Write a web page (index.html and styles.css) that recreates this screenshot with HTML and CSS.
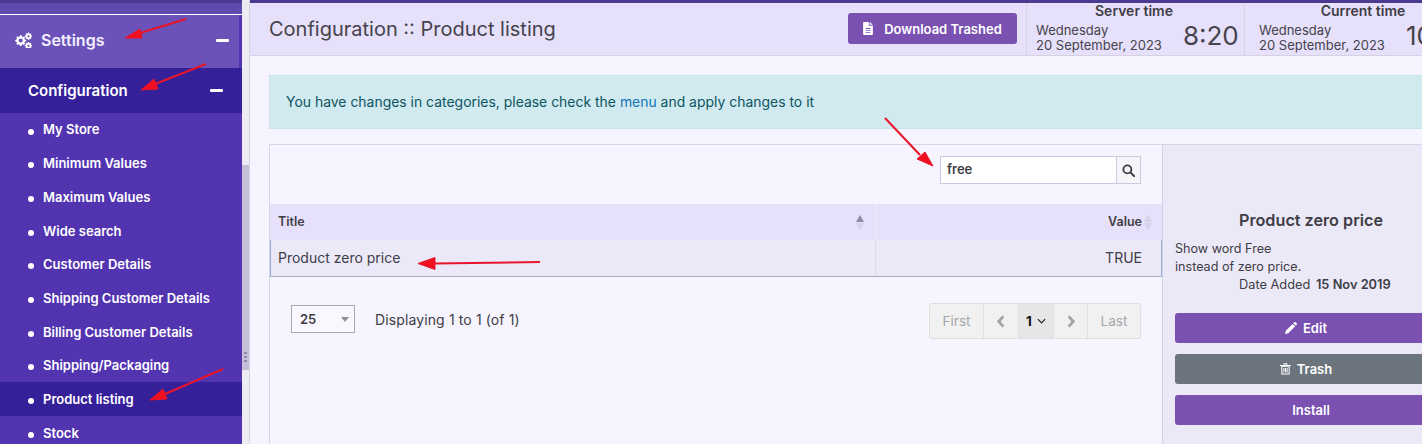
FILE: index.html
```html
<!DOCTYPE html>
<html lang="en">
<head>
<meta charset="utf-8">
<title>Configuration :: Product listing</title>
<link rel="stylesheet" href="styles.css">
</head>
<body>
<div class="page">
  <aside class="sidebar">
    <div class="side-top"></div>
    <div class="side-settings">
      <svg class="gears" viewBox="0 0 18 16" width="18" height="16"><g fill="#fff"><path fill-rule="evenodd" d="M6 3.2l1.4-.1.4 1.3 1 .5 1.2-.6 1 1-.6 1.2.5 1 1.3.4v1.4l-1.3.4-.5 1 .6 1.2-1 1-1.2-.6-1 .5-.4 1.3H6l-.4-1.3-1-.5-1.2.6-1-1 .6-1.2-.5-1L1.200 9.300V7.900l1.300-.4.5-1-.6-1.200 1-1 1.200.6 1-.5zM6.700 6.500a2 2 0 1 0 0 4.100 2 2 0 0 0 0-4.100z"/><path fill-rule="evenodd" d="M14 .5h1l.3.9.6.3.9-.4.600.7-.4.800.3.600.9.300v1l-.9.3-.3.600.4.800-.6.700-.9-.4-.6.3-.3.900h-1l-.3-.9-.6-.3-.8.4-.7-.7.4-.8-.3-.6-.9-.3v-1l.9-.3.3-.6-.4-.8.7-.7.8.4.6-.3zM14.500 3.200a1.100 1.100 0 1 0 0 2.200 1.100 1.100 0 0 0 0-2.200z"/><path fill-rule="evenodd" d="M14 10h1l.3.900.6.300.9-.4.600.7-.4.800.3.600.9.300v1l-.9.300-.3.600.4.800-.6.700-.9-.4-.6.300-.3.900h-1l-.3-.9-.6-.3-.8.4-.7-.7.4-.8-.3-.6-.9-.3v-1l.9-.3.3-.6-.4-.8.7-.7.8.4.6-.3zM14.500 12.700a1.100 1.100 0 1 0 0 2.200 1.100 1.100 0 0 0 0-2.200z"/></g></svg>
      <span class="settings-label">Settings</span>
      <span class="minus"></span>
    </div>
    <div class="side-config">
      <span class="config-label">Configuration</span>
      <span class="minus"></span>
    </div>
    <ul class="side-list">
      <li class="side-item">My Store</li>
      <li class="side-item">Minimum Values</li>
      <li class="side-item">Maximum Values</li>
      <li class="side-item">Wide search</li>
      <li class="side-item">Customer Details</li>
      <li class="side-item">Shipping Customer Details</li>
      <li class="side-item">Billing Customer Details</li>
      <li class="side-item">Shipping/Packaging</li>
      <li class="side-item active">Product listing</li>
      <li class="side-item">Stock</li>
    </ul>
  </aside>
  <div class="rail"><div class="rail-thumb"><span class="grip"></span></div></div>
  <main class="main">
    <div class="top-strip"></div>
    <header class="header">
      <h1 class="page-title">Configuration :: Product listing</h1>
      <button class="btn-download">
        <svg viewBox="0 0 12 16" width="10" height="13"><path fill="#fff" fill-rule="evenodd" d="M1 0h6v4.500h5V15a1 1 0 0 1-1 1H1a1 1 0 0 1-1-1V1a1 1 0 0 1 1-1zm7 0l4 3.500H8zM3 7.500v1h6v-1zm0 2.500v1h6v-1zm0 2.500v1h6v-1z"/></svg>
        Download Trashed
      </button>
      <section class="clock clock-server">
        <h2 class="clock-title">Server time</h2>
        <div class="clock-body">
          <div class="clock-date">Wednesday<br>20 September, 2023</div>
          <div class="clock-time">8:20</div>
        </div>
      </section>
      <section class="clock clock-current">
        <h2 class="clock-title">Current time</h2>
        <div class="clock-body">
          <div class="clock-date">Wednesday<br>20 September, 2023</div>
          <div class="clock-time">10:20</div>
        </div>
      </section>
    </header>
    <div class="content">
      <div class="alert">You have changes in categories, please check the <a class="alert-link">menu</a> and apply changes to it</div>
      <div class="panel">
        <div class="listing">
          <div class="search-row">
            <div class="search">
              <span class="search-input">free</span>
              <span class="search-btn"><svg viewBox="0 0 14 14" width="13" height="13"><circle cx="5.800" cy="5.800" r="4.300" fill="none" stroke="#3f3f46" stroke-width="2"/><path d="M9 9l4 4" stroke="#3f3f46" stroke-width="2.200" stroke-linecap="round"/></svg></span>
            </div>
          </div>
          <div class="thead">
            <div class="th th-title">Title<span class="sort sort-on"><i class="up"></i><i class="down"></i></span></div>
            <div class="th th-value">Value<span class="sort"><i class="up"></i><i class="down"></i></span></div>
          </div>
          <div class="trow">
            <div class="td td-title">Product zero price</div>
            <div class="td td-value">TRUE</div>
          </div>
          <div class="pager-row">
            <div class="per-page">25<span class="caret"></span></div>
            <div class="displaying">Displaying 1 to 1 (of 1)</div>
            <nav class="pager">
              <span class="pg pg-first">First</span>
              <span class="pg pg-arrow"><svg viewBox="0 0 10 14" width="10" height="13"><path d="M7.500 1.500L2.500 7l5 5.500" fill="none" stroke="#a3a3a3" stroke-width="3"/></svg></span>
              <span class="pg pg-cur">1<svg viewBox="0 0 10 6" width="9" height="6"><path d="M1 1l4 4 4-4" fill="none" stroke="#222" stroke-width="1.300"/></svg></span>
              <span class="pg pg-arrow"><svg viewBox="0 0 10 14" width="10" height="13"><path d="M2.500 1.500l5 5.500-5 5.500" fill="none" stroke="#a3a3a3" stroke-width="3"/></svg></span>
              <span class="pg pg-last">Last</span>
            </nav>
          </div>
        </div>
        <div class="details">
          <h3 class="details-title">Product zero price</h3>
          <p class="details-text">Show word Free<br>instead of zero price.</p>
          <p class="details-date">Date Added <b>15 Nov 2019</b></p>
          <button class="action action-icon action-purple">
            <svg viewBox="0 0 12 12" width="12" height="12"><path fill="#fff" d="M0 12l.8-3.300L7.600 1.900l2.500 2.500-6.800 6.800zM8.300 1.200L9.200.3a1 1 0 0 1 1.400 0l1.100 1.100a1 1 0 0 1 0 1.400l-.9.900z"/></svg>
            Edit
          </button>
          <button class="action action-icon action-grey">
            <svg viewBox="0 0 12 13" width="11" height="12"><path fill="none" stroke="#fff" stroke-width="1.100" d="M2 3.500h8V12H2zM4.200 5.500v4.800M6 5.500v4.800M7.800 5.500v4.800"/><path fill="#fff" d="M0 2h12v1.100H0zM4 .3h4V2H7V1.200H5V2H4z"/></svg>
            Trash
          </button>
          <button class="action action-purple">Install</button>
        </div>
      </div>
    </div>
  </main>
</div>
<svg class="arrows" viewBox="0 0 1422 444" width="1422" height="444">
  <g fill="#f01020" stroke="#e8142a">
    <path d="M186 19L140 33" stroke-width="2" fill="none"/><path d="M125 38l15-9 2 9z" stroke-width="1"/>
    <path d="M206 64L155 84" stroke-width="2" fill="none"/><path d="M141 90l13-11 4 10z" stroke-width="1"/>
    <path d="M223 369L165 394" stroke-width="2" fill="none"/><path d="M150 400l13-11 4 10z" stroke-width="1"/>
    <path d="M885 118l35 37" stroke-width="2" fill="none"/><path d="M933 166l-16-7 8-7z" stroke-width="1"/>
    <path d="M540 262l-105 1.500" stroke-width="2" fill="none"/><path d="M418 263.500l17-6 0 12z" stroke-width="1"/>
  </g>
</svg>
</body>
</html>
```
FILE: styles.css
```css
* { box-sizing: border-box; }
html, body { margin: 0; padding: 0; height: 444px; overflow: hidden; }
body { font-family: Inter, "Liberation Sans", sans-serif; color: #3f3d45; background: #f6f4ff; position: relative; }
button { font-family: inherit; border: 0; cursor: pointer; }
h1, h2, h3, p, ul { margin: 0; padding: 0; }
ul { list-style: none; }

.page { display: flex; width: 1422px; height: 444px; }

.sidebar { width: 242px; flex: none; background: #5234b0; color: #fff; display: flex; flex-direction: column; overflow: hidden; }
.side-top { height: 15px; width: 100%; background: #5f4ab0; border-top: 3px solid #4b3a90; border-bottom: 1px solid #fff; flex: none; }
.side-settings { height: 53px; flex: none; width: 239px; background: #6a52b8; display: flex; align-items: center; padding: 0 10px 3px 14px; }
.gears { margin-right: 9px; }
.settings-label { font-size: 16px; font-weight: 600; flex: 1; color: #f3f0ff; }
.minus { width: 13px; height: 3px; background: #fff; border-radius: 1px; }
.side-config { height: 44.600px; flex: none; background: #36209a; display: flex; align-items: center; padding: 0 19px 0 28px; }
.config-label { font-size: 15px; font-weight: 600; flex: 1; }
.side-item { height: 33.700px; display: flex; align-items: center; padding-left: 43px; font-size: 13px; font-weight: 600; position: relative; }
.side-item::before { content: ""; position: absolute; left: 28px; top: 16px; width: 6px; height: 6px; border-radius: 50%; background: #fff; }
.side-item.active { background: #36209a; }

.rail { width: 8px; flex: none; background: #ececf2; border-right: 1px solid #d6d4e2; padding-top: 165px; }
.rail-thumb { height: 205px; background: #c4c0d8; width: 7px; display: flex; align-items: flex-end; justify-content: center; padding-bottom: 6px; }
.grip { width: 3px; height: 12px; background: repeating-linear-gradient(#8e88b0 0 2px, transparent 2px 4px); }

.main { flex: 1; min-width: 0; overflow: hidden; display: flex; flex-direction: column; }
.top-strip { height: 3px; background: #4b3a90; flex: none; }
.header { height: 53px; flex: none; background: #e6e0fb; border-bottom: 1px solid #d5d3e2; display: flex; align-items: stretch; padding-left: 19px; white-space: nowrap; }
.page-title { font-size: 20px; font-weight: 400; line-height: 52px; color: #45434b; width: 579px; flex: none; letter-spacing: 0; }
.btn-download { width: 169px; height: 31px; margin-top: 10px; margin-right: 9px; flex: none; background: #7a50b0; color: #fff; font-size: 13px; font-weight: 600; border-radius: 3px; display: flex; align-items: center; justify-content: center; gap: 11px; }
.clock { width: 218px; flex: none; border-left: 1px solid #d5d3e2; padding-left: 9px; }
.clock-current { width: 240px; padding-left: 14px; }
.clock-title { font-size: 14px; font-weight: 600; text-align: center; line-height: 16px; color: #3f3d45; width: 196px; }
.clock-current .clock-title { width: 208px; }
.clock-body { display: flex; align-items: flex-end; gap: 21px; }
.clock-date { font-size: 13px; line-height: 15px; color: #45434b; margin-top: 4px; flex: none; }
.clock-time { font-size: 26px; line-height: 30px; color: #45434b; flex: none; margin-bottom: 2px; }

.content { flex: 1; padding: 19px 0 0 19px; min-height: 0; }
.alert { height: 54px; width: 1200px; background: #d0eaf0; border: 1px solid #c8e4ea; color: #0f5560; font-size: 13.950px; line-height: 52px; padding-left: 16px; margin-bottom: 15px; }
.alert-link { color: #1476b8; }
.panel { display: flex; border: 1px solid #d8d6e6; border-right: 0; border-bottom: 0; width: 1200px; height: 320px; }
.listing { width: 892px; flex: none; }
.search-row { height: 59px; display: flex; justify-content: flex-end; padding: 11px 21px 0 0; }
.search { display: flex; height: 28px; width: 201px; border: 1px solid #c8cce0; }
.search-input { flex: 1; background: #fff; font-size: 13px; font-weight: 600; line-height: 24px; padding-left: 6px; color: #3f3d45; }
.search-btn { width: 24px; border-left: 1px solid #c8cce0; background: #f6f5fa; display: flex; align-items: center; justify-content: center; }
.thead { display: flex; height: 36px; background: #e6e0fb; }
.th { font-size: 12.500px; font-weight: 600; line-height: 36px; position: relative; display: flex; align-items: center; }
.th-title { width: 606px; padding-left: 8px; justify-content: space-between; border-right: 1px solid #ecebf6; padding-right: 11px; }
.th-value { flex: 1; justify-content: flex-end; }
.sort { width: 10px; display: flex; flex-direction: column; align-items: center; gap: 1px; margin-left: 1px; margin-right: 9px; }
.th-title .sort { margin: 0 -1px 0 0; }
.sort i { width: 0; height: 0; border-left: 4px solid transparent; border-right: 4px solid transparent; }
.sort .up { border-bottom: 7px solid #d4d0e8; }
.sort .down { border-top: 7px solid #d4d0e8; }
.sort-on .up { border-bottom-color: #908ca8; }
.trow { display: flex; height: 37px; background: #ebe9f8; border-left: 1px solid #8fb0d8; border-right: 1px solid #8fb0d8; border-bottom: 1px solid #a9aac2; font-size: 14px; line-height: 36px; }
.td-title { width: 605px; padding-left: 7px; border-right: 1px solid #dcdaea; }
.td-value { flex: 1; text-align: right; padding-right: 19px; }
.pager-row { display: flex; align-items: flex-start; padding: 28px 21px 0 21px; }
.per-page { width: 64px; height: 28px; border: 1px solid #a8a8b4; background: #f9f8ff; font-size: 13px; font-weight: 600; line-height: 27px; padding-left: 8px; position: relative; }
.caret { position: absolute; right: 5px; top: 11px; border-left: 4px solid transparent; border-right: 4px solid transparent; border-top: 5px solid #909090; }
.displaying { font-size: 14px; letter-spacing: 0.12px; line-height: 30px; margin-left: 20px; flex: 1; }
.pager { display: flex; height: 36px; margin-top: -2px; border: 1px solid #dededf; border-radius: 3px; background: #f1f1f2; color: #a6a6a8; font-size: 13.500px; }
.pg { display: flex; align-items: center; justify-content: center; height: 100%; border-left: 1px solid #dededf; }
.pg:first-child { border-left: 0; }
.pg-first { width: 53px; }
.pg-arrow { width: 35px; }
.pg-cur { width: 35px; gap: 5px; background: #e6e6e8; color: #111; font-weight: 700; }
.pg-cur + .pg-arrow { width: 34px; }
.pg-last { width: 53px; }

.details { flex: 1; background: #ebe9f8; border-left: 1px solid #d4d2e2; padding: 66px 0 0 12px; min-width: 0; }
.details-title { font-size: 16.200px; font-weight: 600; text-align: center; width: 272px; line-height: 19px; white-space: nowrap; }
.details-text { font-size: 12.600px; line-height: 18px; margin-top: 10px; }
.details-date { font-size: 12.800px; line-height: 18px; text-align: left; padding-left: 64px; white-space: nowrap; }
.details-date b { font-weight: 600; margin-left: 2px; }
.action { width: 300px; height: 30px; border-radius: 3px; display: flex; align-items: center; justify-content: center; gap: 6px; color: #fff; font-size: 13px; font-weight: 600; margin-bottom: 11px; padding-right: 34px; }
.action-icon { padding-right: 44px; }
.details-date + .action { margin-top: 19px; }
.action-purple { background: #7a50b0; }
.action-grey { background: #6c757d; }

.arrows { position: absolute; left: 0; top: 0; pointer-events: none; }
```
